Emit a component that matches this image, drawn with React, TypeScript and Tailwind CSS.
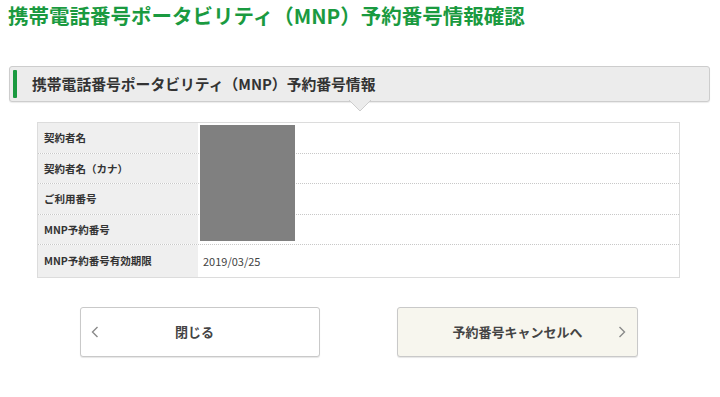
import React from "react"

const rows = [
  { label: "契約者名", value: "", h: "h-[31px]" },
  { label: "契約者名（カナ）", value: "", h: "h-[30px]" },
  { label: "ご利用番号", value: "", h: "h-[31px]" },
  { label: "MNP予約番号", value: "", h: "h-[30px]" },
  { label: "MNP予約番号有効期限", value: "2019/03/25", h: "h-[32px]" },
]

function Chevron({ dir }: { dir: "left" | "right" }) {
  return (
    <svg width="8" height="12" viewBox="0 0 8 12" className="shrink-0">
      <path
        d={dir === "left" ? "M6.5 1 L1.5 6 L6.5 11" : "M1.5 1 L6.5 6 L1.5 11"}
        fill="none"
        stroke="#8a8a8a"
        strokeWidth="1.4"
      />
    </svg>
  )
}

export default function App() {
  return (
    <div
      className="w-[720px] h-[397px] bg-white overflow-hidden"
      style={{ fontFamily: '"Noto Sans CJK JP", "Noto Sans", sans-serif' }}
    >
      {/* ページタイトル */}
      <h1 className="h-[30px] leading-[30px] pl-[8px] text-[20.5px] font-bold text-[#1a9a40] whitespace-nowrap">
        携帯電話番号ポータビリティ（MNP）予約番号情報確認
      </h1>

      {/* 見出しボックス */}
      <div className="relative mt-[36px] ml-[9px] mr-[10px] h-[36px] flex items-center bg-[#ececec] border border-[#cdcdcd] rounded-[3px] shadow-[0_1px_1px_rgba(0,0,0,0.08)]">
        <div className="ml-[3px] w-[4px] h-[28px] bg-[#1a9a40] rounded-[1px]" />
        <div className="ml-[15px] text-[14.8px] font-bold text-[#333] whitespace-nowrap">
          携帯電話番号ポータビリティ（MNP）予約番号情報
        </div>
        <svg
          width="22"
          height="12"
          viewBox="0 0 22 12"
          className="absolute left-[339px] top-full -mt-[1px]"
        >
          <polygon points="0,0 11,11 22,0" fill="#ececec" />
          <polyline points="0,0 11,11 22,0" fill="none" stroke="#cdcdcd" strokeWidth="1" />
        </svg>
      </div>

      {/* 情報テーブル */}
      <div className="relative mt-[20px] ml-[37px] mr-[40px] border border-[#dcdcdc]">
        {rows.map((row, i) => (
          <div
            key={row.label}
            className={`flex ${row.h} ${i === rows.length - 1 ? "" : "border-b border-dotted border-[#c8c8c8]"}`}
          >
            <div className="w-[160px] shrink-0 bg-[#efefef] flex items-center pl-[6px] text-[10.5px] font-bold text-[#333]">
              {row.label}
            </div>
            <div className="flex-1 flex items-center pl-[5px] text-[11px] text-[#444]">{row.value}</div>
          </div>
        ))}
        <div className="absolute left-[162px] top-[2px] w-[95px] h-[116px] bg-[#808080]" />
      </div>

      {/* ボタン */}
      <div className="mt-[29px] flex gap-[77px] pl-[80px]">
        <button className="relative w-[240px] h-[50px] bg-white border border-[#c9c9c9] rounded-[3px] shadow-[0_1px_1px_rgba(0,0,0,0.1)] flex items-center justify-center pr-[11px] text-[13px] font-bold text-[#444]">
          <span className="absolute left-[10px] top-1/2 -translate-y-1/2">
            <Chevron dir="left" />
          </span>
          閉じる
        </button>
        <button className="relative w-[241px] h-[50px] bg-[#f7f6ee] border border-[#c9c9c9] rounded-[3px] shadow-[0_1px_1px_rgba(0,0,0,0.1)] flex items-center justify-center text-[13px] font-bold text-[#444]">
          予約番号キャンセルへ
          <span className="absolute right-[11px] top-1/2 -translate-y-1/2">
            <Chevron dir="right" />
          </span>
        </button>
      </div>
    </div>
  )
}
